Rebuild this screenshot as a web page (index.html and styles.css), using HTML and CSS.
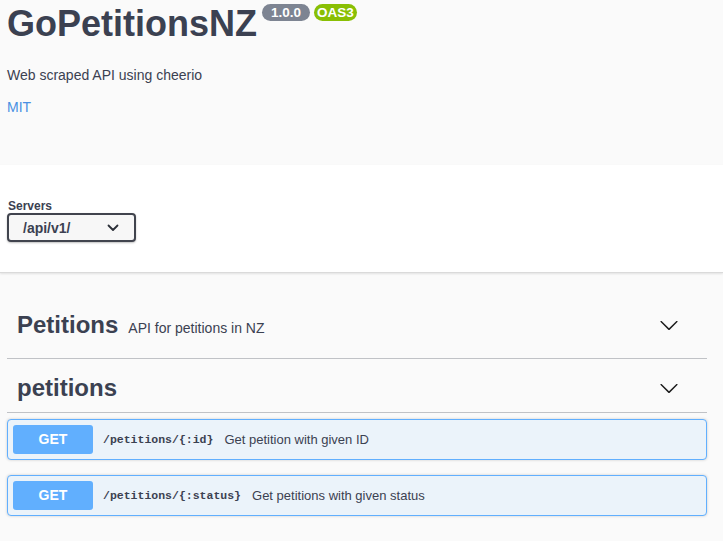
FILE: index.html
```html
<!DOCTYPE html>
<html lang="en">
<head>
<meta charset="utf-8">
<title>GoPetitionsNZ</title>
<link rel="stylesheet" href="styles.css">
</head>
<body>
<div class="info">
  <div class="title-row">
    <h2 class="title">GoPetitionsNZ</h2>
    <span class="badge badge-version">1.0.0</span>
    <span class="badge badge-oas">OAS3</span>
  </div>
  <p class="description">Web scraped API using cheerio</p>
  <a class="license" href="#">MIT</a>
</div>

<section class="scheme-container">
  <div class="servers-label">Servers</div>
  <div class="select">
    <span class="select-value">/api/v1/</span>
    <svg class="select-caret" width="12" height="8" viewBox="0 0 12 8"><polyline points="1.5,1.5 6,6 10.5,1.5" fill="none" stroke="#2b2f38" stroke-width="1.8" stroke-linecap="round" stroke-linejoin="round"/></svg>
  </div>
</section>

<main class="tags">
  <div class="tag-row tag-row-first">
    <h3 class="tag-title"><span class="tag-name">Petitions</span><span class="tag-desc">API for petitions in NZ</span></h3>
    <svg class="arrow" width="20" height="20" viewBox="0 0 20 20"><path d="M17.418 6.109c.272-.268.709-.268.979 0s.271.701 0 .969l-7.908 7.83c-.27.268-.707.268-.979 0l-7.908-7.83c-.27-.268-.27-.701 0-.969.271-.268.709-.268.979 0L10 13.25l7.418-7.141z" fill="#1b1b1b"/></svg>
  </div>
  <div class="tag-row tag-row-second">
    <h3 class="tag-title"><span class="tag-name">petitions</span></h3>
    <svg class="arrow" width="20" height="20" viewBox="0 0 20 20"><path d="M17.418 6.109c.272-.268.709-.268.979 0s.271.701 0 .969l-7.908 7.83c-.27.268-.707.268-.979 0l-7.908-7.830c-.27-.268-.27-.701 0-.969.271-.268.709-.268.979 0L10 13.25l7.418-7.141z" fill="#1b1b1b"/></svg>
  </div>

  <div class="opblock">
    <span class="method">GET</span>
    <span class="path">/petitions/{:id}</span>
    <span class="op-desc">Get petition with given ID</span>
  </div>
  <div class="opblock">
    <span class="method">GET</span>
    <span class="path">/petitions/{:status}</span>
    <span class="op-desc">Get petitions with given status</span>
  </div>
</main>
</body>
</html>
```

FILE: styles.css
```css
html, body {
  margin: 0;
  padding: 0;
  background: #fafafa;
  font-family: "Liberation Sans", Arial, sans-serif;
  color: #3b4151;
}

.info {
  padding: 2px 7px 49px;
}

.title-row {
  display: flex;
  align-items: flex-start;
}

.title {
  margin: 0;
  font-size: 36px;
  line-height: 43px;
  font-weight: bold;
  color: #3b4151;
}

.badge {
  margin-top: 2px;
  height: 17px;
  line-height: 17px;
  border-radius: 57px;
  color: #fff;
  font-size: 13.5px;
  font-weight: bold;
}

.badge-version {
  margin-left: 5px;
  padding: 0 9px;
  background: #7d8492;
}

.badge-oas {
  margin-left: 4px;
  padding: 0 3px;
  background: #89bf04;
}

.description {
  margin: 21px 0 0;
  font-size: 14px;
  line-height: 18px;
}

.license {
  display: block;
  margin-top: 14px;
  font-size: 14px;
  line-height: 18px;
  color: #4990e2;
  text-decoration: none;
}

.scheme-container {
  background: #fff;
  padding: 34px 7px 30px;
  border-bottom: 1px solid #dadada;
  box-shadow: 0 1px 2px 0 rgba(0, 0, 0, 0.1);
}

.servers-label {
  font-size: 12px;
  line-height: 14px;
  font-weight: bold;
  margin-left: 1px;
}

.select {
  width: 125px;
  height: 25px;
  box-sizing: content-box;
  border: 2px solid #41444e;
  border-radius: 4px;
  background: #f7f7f7;
  box-shadow: 0 1px 2px 0 rgba(0, 0, 0, 0.25);
  display: flex;
  align-items: center;
  padding: 0;
}

.select-value {
  padding-left: 14px;
  font-size: 14px;
  font-weight: bold;
  color: #3b4151;
  flex: 1;
}

.select-caret {
  margin-right: 15px;
}

.tags {
  padding: 19px 16px 20px 7px;
}

.tag-row {
  display: flex;
  align-items: center;
  padding: 0 28px 0 10px;
  margin-bottom: 5px;
  border-bottom: 1px solid rgba(59, 65, 81, 0.3);
}

.tag-row-first {
  height: 66px;
}

.tag-row-second {
  height: 48px;
}

.tag-title {
  flex: 1;
  margin: 0;
  display: flex;
  align-items: baseline;
}

.tag-name {
  font-size: 24px;
  font-weight: bold;
  line-height: 28px;
}

.tag-desc {
  margin-left: 10px;
  font-size: 14px;
  font-weight: normal;
}

.arrow {
  display: block;
}

.opblock {
  display: flex;
  align-items: center;
  padding: 5px;
  margin-top: 6px;
  margin-bottom: 15px;
  background: #ebf3fa;
  border: 1px solid #61affe;
  border-radius: 4px;
  box-shadow: 0 0 3px rgba(0, 0, 0, 0.19);
}

.opblock + .opblock {
  margin-top: 0;
}

.method {
  width: 80px;
  height: 29px;
  line-height: 29px;
  text-align: center;
  background: #61affe;
  border-radius: 3px;
  color: #fff;
  font-size: 14px;
  font-weight: bold;
}

.path {
  padding: 0 11px 0 10px;
  font-family: "Liberation Mono", "Courier New", monospace;
  font-size: 11.5px;
  font-weight: bold;
  color: #3b4151;
}

.op-desc {
  font-size: 13px;
  color: #3b4151;
}
```
